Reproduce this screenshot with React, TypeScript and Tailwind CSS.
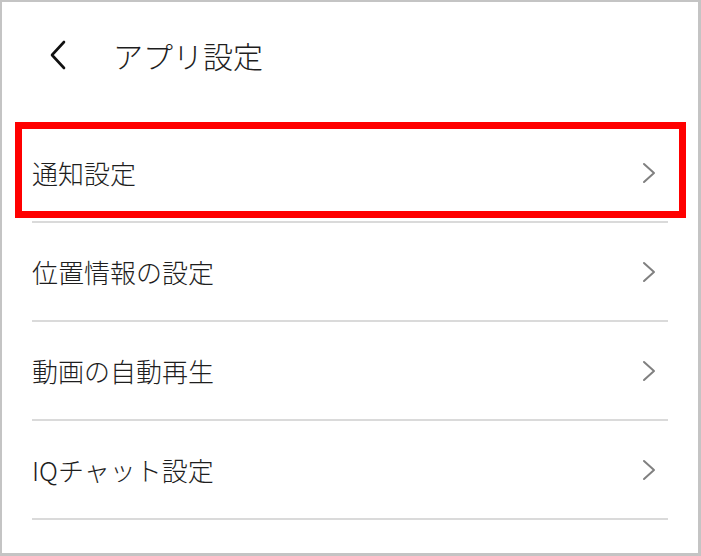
import React from "react";

const items = ["通知設定", "位置情報の設定", "動画の自動再生", "IQチャット設定"];

const Chevron = () => (
  <svg viewBox="0 0 14 22" className="w-[14px] h-[22px] mr-[12px] shrink-0" fill="none">
    <path d="M2 2 L12 11 L2 20" stroke="#808080" strokeWidth="2" strokeLinecap="round" strokeLinejoin="round" />
  </svg>
);

const App = () => {
  return (
    <div
      className="w-[701px] h-[556px] bg-white border-l-2 border-t-2 border-r-[3px] border-b-[3px] border-[#c4c4c4] text-[#1e1e1e]"
      style={{ fontFamily: '"Noto Sans CJK JP", "Noto Sans", sans-serif' }}
    >
      {/* ヘッダー */}
      <div className="h-[106px] flex items-center pl-[47px]">
        <svg viewBox="0 0 18 30" className="w-[18px] h-[30px] shrink-0" fill="none">
          <path d="M15 2 L3 15 L15 28" stroke="#111" strokeWidth="2.6" strokeLinecap="round" strokeLinejoin="round" />
        </svg>
        <h1 className="ml-[46px] text-[30px] font-light leading-none">アプリ設定</h1>
      </div>

      <ul className="px-[30px] pt-[16px]">
        {items.map((label, i) => (
          <li
            key={label}
            className="relative h-[99px] flex items-center justify-between border-b-2 border-[#dadada]"
          >
            <span className="text-[26px] font-light leading-none">{label}</span>
            <Chevron />
            {i === 0 && (
              <div className="absolute -left-[17px] -right-[18px] -top-[2px] bottom-[3px] border-[7px] border-[#ff0000]" />
            )}
          </li>
        ))}
      </ul>
    </div>
  );
};

export default App;
